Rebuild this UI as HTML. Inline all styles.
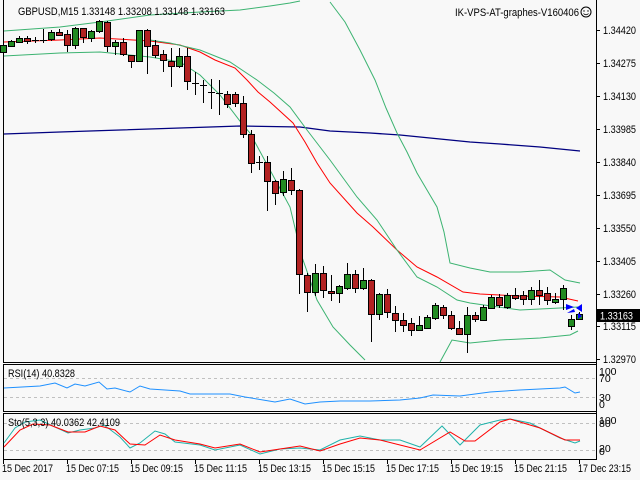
<!DOCTYPE html>
<html><head><meta charset="utf-8"><style>
html,body{margin:0;padding:0;background:#f8f8f8;}
svg{display:block;font-family:"Liberation Sans",Tahoma,sans-serif;font-size:11px;}
</style></head><body>
<svg id="s" width="640" height="480" viewBox="0 0 640 480" xmlns="http://www.w3.org/2000/svg">
<rect width="640" height="480" fill="#f8f8f8"/>
<line x1="3.5" y1="0" x2="3.5" y2="362" stroke="#000"/>
<line x1="596.5" y1="0" x2="596.5" y2="460" stroke="#000"/>
<line x1="3" y1="362.5" x2="597" y2="362.5" stroke="#000"/>
<rect x="3.5" y="364.5" width="593" height="47" fill="none" stroke="#000"/>
<rect x="3.5" y="413.5" width="593" height="46" fill="none" stroke="#000"/>
<g stroke="#c0c0c0" stroke-dasharray="3,3">
<line x1="4" y1="378.5" x2="596" y2="378.5"/><line x1="4" y1="397.5" x2="596" y2="397.5"/>
<line x1="4" y1="423.5" x2="596" y2="423.5"/><line x1="4" y1="450.5" x2="596" y2="450.5"/>
</g>
<g id="lines" fill="none" stroke-width="1">
<polyline stroke="#000080" stroke-width="1.3" points="4,134 60,132 120,130 180,128 240,126 300,127 330,131 370,133 400,135 440,139 470,142 500,144 540,147 580,151"/>
<polyline stroke="#3cb371" points="4,31 60,27 100,22 150,15 200,12 240,10 270,6 290,3 300,1"/>
<polyline stroke="#3cb371" points="330,2 345,22 360,50 375,80 386,108 397,133 407,152 417,173 427,190 437,207 444,232 450,263 470,268 490,272 520,272 550,270 565,280 580,283"/>
<polyline stroke="#ff0000" points="4,42 60,40 100,38 150,41 180,45 200,52 215,60 235,68 247,80 258,92 270,102 293,123 305,142 317,163 330,183 357,213 373,227 397,250 417,267 437,277 463,292 480,294 520,296 560,297 578,301"/>
<polyline stroke="#3cb371" points="150,40 170,43 200,50 230,62 257,80 274,93 290,107 307,130 330,160 357,197 377,220 397,250 417,277 437,287 457,300 470,303 520,310 560,308 578,307"/>
<polyline stroke="#3cb371" points="4,56 60,53 100,52 150,57 180,62 200,75 220,95 243,125 250,133 270,170 290,207 302,257 317,300 333,327 350,345 365,360"/>
<polyline stroke="#3cb371" points="440,362 452,340 470,343 500,340 540,338 570,335 578,331"/>
<polyline stroke="#1e90ff" points="4,388 40,386 55,383 67,388 75,384 85,386 99,382 107,389 115,388 130,392 140,386 150,389 165,390 180,391 190,394 230,394 245,397 275,402 290,399 305,404 320,402 340,401 370,401 400,400 420,398 433,395 460,396 490,392 520,390 560,388 565,387 575,393 580,392"/>
<polyline stroke="#20b2aa" points="4,443 15,428 25,422 40,420 55,427 68,433 80,430 95,428 104,425 120,437 130,448 140,443 155,431 165,434 175,442 200,445 215,450 240,445 260,454 280,449 300,448 320,450 340,440 360,436 380,440 400,440 420,447 442,426 460,445 480,425 500,420 510,419 530,423 560,438 575,443 580,441"/>
<polyline stroke="#ff0000" points="4,447 20,430 33,424 50,425 68,432 85,432 100,426 115,430 130,444 145,445 160,435 175,440 200,444 215,448 240,444 260,452 280,449 300,446 320,451 340,444 360,438 380,440 400,445 420,450 450,432 465,441 475,441 500,422 510,419 540,428 565,440 580,440"/>
</g>
<g id="c"></g>
<g fill="#0000ff">
<path d="M566,304 l8,3 l-8,3 z"/><path d="M567,313 l7,-4 l1,3 z"/>
<path d="M582,304 l-6,4 l6,4 z"/><path d="M578,313 l4,3 l-4,3 z"/>
</g>
<text x="18" y="15" fill="#000" textLength="207" lengthAdjust="spacingAndGlyphs">GBPUSD,M15  1.33148 1.33208 1.33148 1.33163</text>
<text x="455" y="16" fill="#000" textLength="124" lengthAdjust="spacingAndGlyphs">IK-VPS-AT-graphes-V160406</text>
<circle cx="586" cy="12" r="5" fill="none" stroke="#000"/>
<circle cx="584" cy="11" r="0.7"/><circle cx="588" cy="11" r="0.7"/>
<path d="M583.5,13.5 q2.5,2.5 5,0" fill="none" stroke="#000" stroke-width="0.8"/>
<g fill="#000" id="ax"></g>
<rect x="597" y="309" width="43" height="13" fill="#000"/>
<text x="600" y="319.5" fill="#fff" textLength="33" lengthAdjust="spacingAndGlyphs">1.33163</text>
<text x="8" y="377" textLength="67" lengthAdjust="spacingAndGlyphs">RSI(14) 40.8328</text>
<text x="8" y="426" textLength="112" lengthAdjust="spacingAndGlyphs">Sto(5,3,3) 40.0362 42.4109</text>
<g font-size="10.5">
<text x="599" y="375">100</text><text x="599" y="382">70</text>
<text x="599" y="401">30</text><text x="599" y="408">0</text>
<text x="599" y="424">100</text><text x="599" y="427">80</text>
<text x="599" y="452">20</text><text x="599" y="455">0</text>
</g>
</svg>
<script>
var ns="http://www.w3.org/2000/svg";
function el(p,t,a){var e=document.createElementNS(ns,t);for(var k in a)e.setAttribute(k,a[k]);p.appendChild(e);return e;}
var D=[
[3,'g',45,52,43,56],[11,'g',41,46,40,47],[19,'g',38,42,36,43],[27,'r',38,41,36,44],[35,'d',40,40,37,43],
[43,'d',40,40,29,43],[51,'g',32,39,30,41],[59,'r',32,35,29,36],[67,'r',34,45,30,52],[75,'g',28,45,27,49],
[83,'r',28,37,28,43],[91,'g',31,38,30,42],[99,'g',21,31,20,33],[107,'r',22,46,21,52],[115,'g',42,46,40,55],
[123,'r',42,54,38,56],[131,'r',55,61,55,68],[139,'g',30,61,30,62],[147,'r',30,46,29,74],[155,'r',45,55,40,58],
[163,'r',54,60,50,72],[171,'r',61,66,48,87],[179,'g',56,66,48,68],[187,'r',56,81,48,90],[195,'d',83,83,72,95],
[203,'d',85,85,80,103],[211,'d',92,92,79,109],[219,'d',93,93,80,115],[227,'r',94,104,91,108],
[235,'r',94,103,92,107],[243,'r',103,134,96,138],[251,'r',134,163,130,173],[259,'d',162,162,156,170],
[267,'r',162,181,156,211],[275,'r',181,193,180,205],[283,'g',179,192,171,196],[291,'r',180,190,168,195],
[299,'r',190,274,189,294],[307,'r',275,292,273,312],[315,'g',273,292,264,296],[323,'r',273,290,266,298],
[331,'r',291,293,275,301],[339,'g',286,293,285,303],[347,'g',274,288,263,290],[355,'r',274,288,270,293],
[363,'g',280,288,268,290],[371,'r',280,314,279,342],[379,'g',294,314,293,320],[387,'r',294,312,289,318],
[395,'r',313,320,306,332],[403,'r',320,325,313,332],[411,'r',323,330,318,336],[419,'g',325,330,316,331],
[427,'g',317,328,315,329],[435,'g',305,318,303,320],[443,'r',307,315,305,319],[451,'r',315,328,311,330],
[459,'r',328,334,321,334],[467,'g',315,334,307,353],[475,'r',315,319,312,322],[483,'g',307,320,305,321],
[491,'g',297,308,295,309],[499,'r',297,305,294,308],[507,'g',295,307,293,309],[515,'r',295,298,288,300],
[523,'r',295,299,291,305],[531,'g',290,299,287,305],[539,'r',290,295,280,305],[547,'r',293,300,287,305],
[555,'g',299,302,293,304],[563,'g',288,299,285,310],[571,'g',319,326,315,330],[579,'g',314,319,312,320]];
var g=document.getElementById('c');
D.forEach(function(d){var x=d[0];
el(g,'line',{x1:x+.5,y1:d[4],x2:x+.5,y2:d[5],stroke:'#000'});
if(d[1]=='d'){el(g,'line',{x1:x-3,y1:d[2]+.5,x2:x+4,y2:d[2]+.5,stroke:'#000'});}
else el(g,'rect',{x:x-2.5,y:d[2]+.5,width:6,height:Math.max(1,d[3]-d[2]),fill:d[1]=='g'?'#228b22':'#b22222',stroke:'#000'});
});
var ax=document.getElementById('ax');
var P=[["1.34420",30],["1.34275",63],["1.34130",96],["1.33985",129],["1.33840",162],["1.33695",195],["1.33550",228],["1.33405",261],["1.33260",294],["1.33115",326],["1.32970",359]];
P.forEach(function(p){el(ax,'line',{x1:597,y1:p[1]+.5,x2:600,y2:p[1]+.5,stroke:'#000'});var t=el(ax,'text',{x:603,y:p[1]+4,textLength:33,lengthAdjust:'spacingAndGlyphs'});t.textContent=p[0];});
var T=[["15 Dec 2017",3],["15 Dec 07:15",67],["15 Dec 09:15",131],["15 Dec 11:15",195],["15 Dec 13:15",259],["15 Dec 15:15",323],["15 Dec 17:15",387],["15 Dec 19:15",451],["15 Dec 21:15",515],["17 Dec 23:15",579]];
T.forEach(function(p,i){el(ax,'line',{x1:p[1]+.5,y1:460,x2:p[1]+.5,y2:464,stroke:'#000'});var t=el(ax,'text',{x:p[1]-1,y:472,textLength:i==0?51:53,lengthAdjust:'spacingAndGlyphs'});t.textContent=p[0];});
</script>
</body></html>
